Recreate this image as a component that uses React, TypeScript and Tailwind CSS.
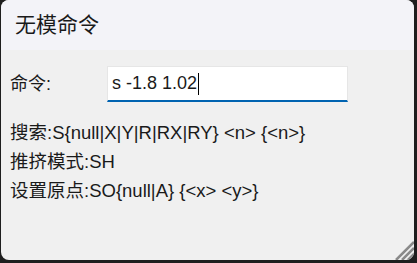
const font = { fontFamily: '"Liberation Sans", "Noto Sans CJK SC", sans-serif' };

function ResizeGrip() {
  return (
    <svg width="22" height="22" viewBox="0 0 22 22" className="absolute bottom-0 right-0">
      <path d="M22 4 L4 22 M22 10 L10 22 M22 16 L16 22" stroke="#8a8a8a" strokeWidth="2.5" />
    </svg>
  );
}

export default function App() {
  return (
    <div className="h-[263px] w-[417px] bg-[#1e1e1e] pl-px pr-[3px] pb-[3px]" style={font}>
      <div className="relative flex h-full flex-col overflow-hidden rounded-[8px] bg-[#f0f0f0] text-[#1a1a1a]">
        <div className="flex h-[50px] shrink-0 items-center bg-[#f3f3f8] pl-[14px] text-[21px]">
          无模命令
        </div>
        <div className="flex flex-col px-[9px] pt-[16px] text-[18px]">
          <div className="flex items-center">
            <span className="w-[97px]">命令:</span>
            <div className="flex h-[36px] w-[241px] items-center border border-[#e6e6e6] border-b-2 border-b-[#0063b1] bg-white pl-[4px]">
              <span>s -1.8 1.02</span>
              <span className="ml-px h-[22px] w-px bg-black" />
            </div>
          </div>
          <div className="mt-[16px] text-[18.5px] leading-[29px]">
            <div>搜索:S{"{null|X|Y|R|RX|RY} <n> {<n>}"}</div>
            <div>推挤模式:SH</div>
            <div>设置原点:SO{"{null|A} {<x> <y>}"}</div>
          </div>
        </div>
        <ResizeGrip />
      </div>
    </div>
  );
}
